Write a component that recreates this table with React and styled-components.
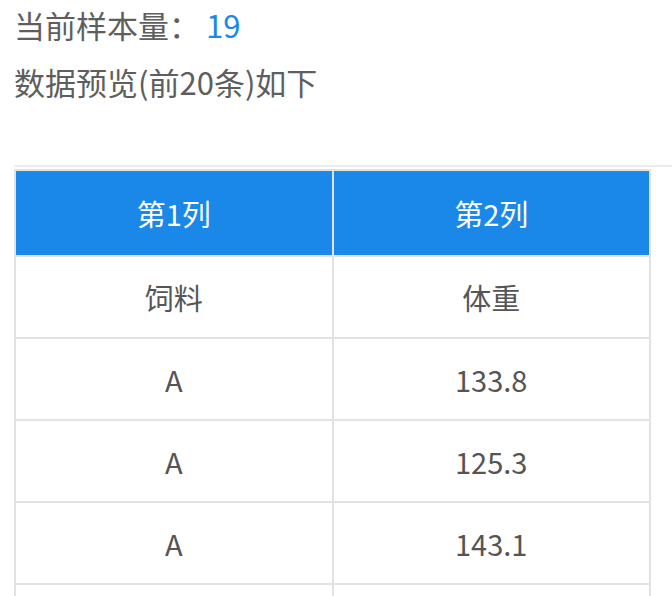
import React from "react";
import styled, { createGlobalStyle } from "styled-components";

const GlobalStyle = createGlobalStyle`
  body {
    margin: 0;
    background: #fff;
    font-family: "Noto Sans CJK SC", "Noto Sans", sans-serif;
  }
`;

const rows = [
  ["饲料", "体重"],
  ["A", "133.8"],
  ["A", "125.3"],
  ["A", "143.1"],
  ["A", "128.9"],
];

export default function App() {
  return (
    <Page>
      <GlobalStyle />
      <Line>
        当前样本量：<Count>19</Count>
      </Line>
      <Line>数据预览(前20条)如下</Line>
      <TableWrap>
        <Table>
          <thead>
            <tr>
              <Th>第1列</Th>
              <Th>第2列</Th>
            </tr>
          </thead>
          <tbody>
            {rows.map((row, i) => (
              <tr key={i}>
                {row.map((cell, j) => (
                  <Td key={j}>{cell}</Td>
                ))}
              </tr>
            ))}
          </tbody>
        </Table>
      </TableWrap>
    </Page>
  );
}

const Page = styled.div`
  padding-left: 14px;
  height: 596px;
  overflow: hidden;
`;

const Line = styled.div`
  font-size: 31px;
  line-height: 50px;
  color: #5e5e5e;
  & + & {
    margin-top: 7px;
  }
`;

const Count = styled.span`
  margin-left: 6px;
  color: #1a88e8;
`;

const TableWrap = styled.div`
  margin-top: 58px;
  border-top: 2px solid #ececec;
  padding-top: 2px;
`;

const Table = styled.table`
  width: 637px;
  border-collapse: collapse;
  table-layout: fixed;
  border: 2px solid #e2e2e2;
`;

const Th = styled.th`
  height: 82px;
  background: #1a88e8;
  color: #fff;
  font-size: 29px;
  font-weight: 400;
  border: 2px solid #e2e2e2;
  text-align: center;
`;

const Td = styled.td`
  height: 78px;
  color: #555;
  font-size: 29px;
  border: 2px solid #e2e2e2;
  text-align: center;
`;
